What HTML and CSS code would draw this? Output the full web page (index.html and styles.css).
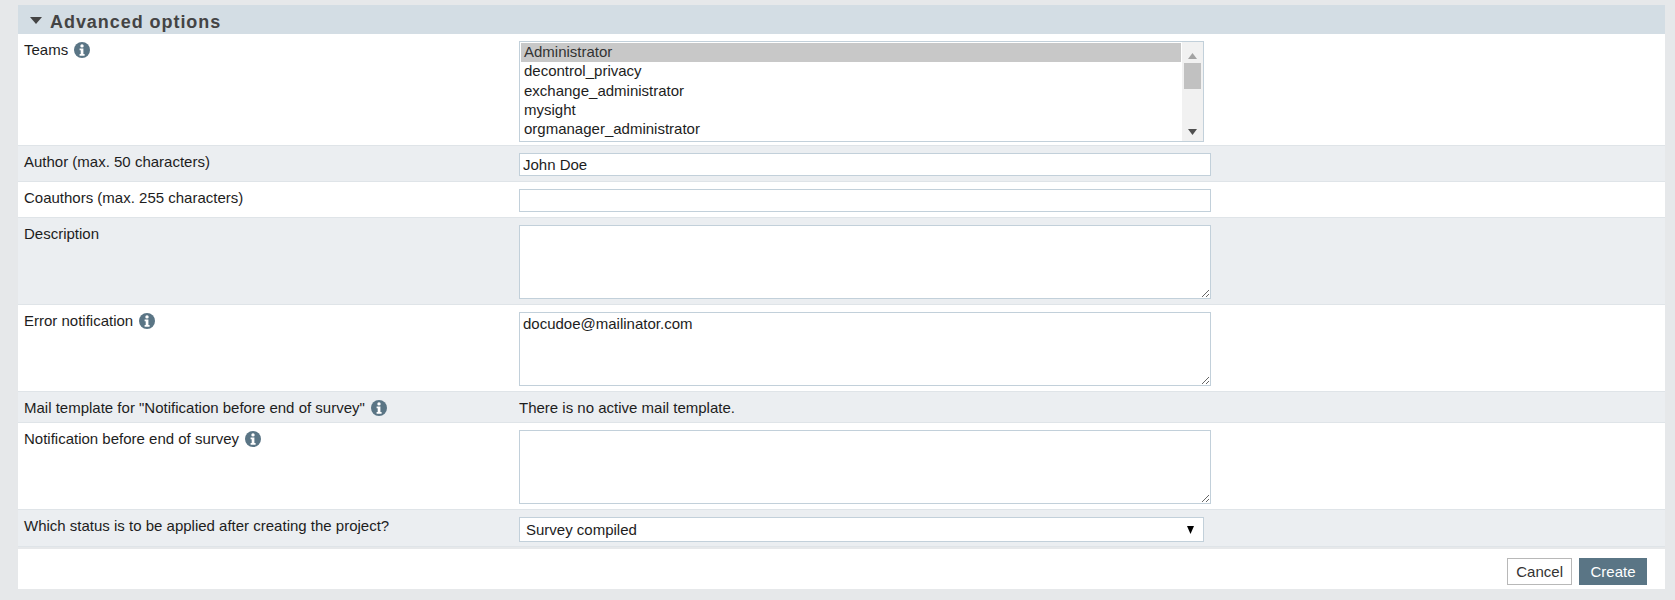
FILE: index.html
```html
<!DOCTYPE html>
<html lang="en">
<head>
<meta charset="utf-8">
<title>Advanced options</title>
<link rel="stylesheet" href="styles.css">
</head>
<body>
<main class="panel">
  <h2 class="section-head">
    <svg class="caret" width="12" height="7" viewBox="0 0 12 7"><path d="M0 0h12L6 7z"/></svg>
    Advanced options
  </h2>
  <div class="row row-teams">
    <div class="label">Teams
      <svg class="info" viewBox="0 0 16 16"><circle cx="8" cy="8" r="8"/><circle cx="8" cy="3.9" r="1.7" fill="#fff"/><path d="M5.6 6.600h3.800v5.500h1.200v1.700H5.600v-1.700h1.100V8.300H5.600z" fill="#fff"/></svg>
    </div>
    <div class="listbox">
      <ul class="options">
        <li class="selected">Administrator</li>
        <li class="tight">decontrol_privacy</li>
        <li>exchange_administrator</li>
        <li>mysight</li>
        <li>orgmanager_administrator</li>
      </ul>
      <div class="scrollbar">
        <svg class="arrow" width="9" height="6" viewBox="0 0 9 6"><path d="M0 6L4.500 0 9 6z" fill="#a3a3a3"/></svg>
        <div class="thumb"></div>
        <svg class="arrow arrow-down" width="9" height="6" viewBox="0 0 9 6"><path d="M0 0h9L4.500 6z" fill="#505050"/></svg>
      </div>
    </div>
  </div>
  <div class="row alt row-input">
    <div class="label">Author (max. 50 characters)</div>
    <input class="field" type="text" value="John Doe">
  </div>
  <div class="row row-input">
    <div class="label">Coauthors (max. 255 characters)</div>
    <input class="field" type="text">
  </div>
  <div class="row alt row-area">
    <div class="label">Description</div>
    <textarea class="field area"></textarea>
  </div>
  <div class="row row-area">
    <div class="label">Error notification
      <svg class="info" viewBox="0 0 16 16"><circle cx="8" cy="8" r="8"/><circle cx="8" cy="3.9" r="1.7" fill="#fff"/><path d="M5.6 6.600h3.800v5.500h1.200v1.700H5.600v-1.700h1.100V8.300H5.600z" fill="#fff"/></svg>
    </div>
    <textarea class="field area">docudoe@mailinator.com</textarea>
  </div>
  <div class="row alt row-text">
    <div class="label">Mail template for "Notification before end of survey"
      <svg class="info" viewBox="0 0 16 16"><circle cx="8" cy="8" r="8"/><circle cx="8" cy="3.9" r="1.7" fill="#fff"/><path d="M5.6 6.600h3.800v5.500h1.200v1.700H5.600v-1.700h1.100V8.300H5.600z" fill="#fff"/></svg>
    </div>
    <div class="value">There is no active mail template.</div>
  </div>
  <div class="row row-area">
    <div class="label">Notification before end of survey
      <svg class="info" viewBox="0 0 16 16"><circle cx="8" cy="8" r="8"/><circle cx="8" cy="3.9" r="1.7" fill="#fff"/><path d="M5.6 6.600h3.800v5.500h1.200v1.700H5.600v-1.700h1.100V8.300H5.600z" fill="#fff"/></svg>
    </div>
    <textarea class="field area"></textarea>
  </div>
  <div class="row alt row-select">
    <div class="label">Which status is to be applied after creating the project?</div>
    <div class="select-wrap">
      <select class="select"><option>Survey compiled</option></select>
      <svg class="select-arrow" width="7" height="8" viewBox="0 0 7 8"><path d="M0 0h7L3.500 8z"/></svg>
    </div>
  </div>
  <div class="gap"></div>
  <footer class="actions">
    <button class="btn" type="button">Cancel</button>
    <button class="btn primary" type="button">Create</button>
  </footer>
</main>
</body>
</html>
```
FILE: styles.css
```css
* { box-sizing: border-box; }
html, body { height: 100%; }
body {
  margin: 0;
  padding: 5px 10px 10px 18px;
  background: #e6e8ea;
  font-family: "Liberation Sans", Arial, sans-serif;
  font-size: 15px;
  color: #1d1d1d;
  overflow: hidden;
}
.panel { background: #fff; }
.section-head {
  display: flex;
  align-items: center;
  gap: 8px;
  height: 29px;
  margin: 0;
  padding: 5px 0 0 12px;
  background: #d3dde4;
  color: #444;
  font-size: 18px;
  font-weight: bold;
  letter-spacing: 0.950px;
}
.caret { fill: #444; margin-top: -4px; }
.row {
  display: grid;
  grid-template-columns: 501px 1fr;
  border-bottom: 1px solid #dfe4e8;
  background: #fff;
}
.row.alt { background: #ebeef1; }
.label {
  padding: 0 0 0 6px;
  line-height: 17px;
}
.info {
  width: 16px;
  height: 16px;
  margin-left: 2px;
  vertical-align: -3px;
  fill: #5a7585;
}
.row-teams { height: 112px; padding-top: 7px; }
.row-input { height: 36px; padding-top: 7px; }
.row-area { height: 87px; padding-top: 7px; }
.row-text { height: 31px; align-items: center; }
.row-select { height: 37px; padding-top: 7px; }
.field {
  display: block;
  width: 692px;
  height: 23px;
  padding: 2px 3px;
  border: 1px solid #c2d0da;
  border-radius: 0;
  background: #fff;
  color: #1d1d1d;
  font: 15px "Liberation Sans", Arial, sans-serif;
  outline: none;
}
.area { height: 74px; resize: vertical; }
.value { color: #1d1d1d; }
.listbox {
  display: flex;
  width: 685px;
  height: 101px;
  border: 1px solid #c2d0da;
  background: #fff;
}
.options {
  flex: 1;
  margin: 0;
  padding: 1px 1px 0;
  list-style: none;
}
.options li {
  height: 19px;
  padding-left: 3px;
  line-height: 19px;
}
.options .selected { background: #c8c8c8; color: #333; line-height: 17px; }
.options .tight { line-height: 18px; }
.scrollbar {
  display: flex;
  flex-direction: column;
  align-items: center;
  width: 21px;
  background: #f1f1f1;
}
.arrow { margin-top: 11px; flex: none; }
.arrow-down { margin: auto 0 6px; }
.thumb { width: 17px; height: 26px; margin-top: 4px; background: #c1c1c1; }
.select-wrap { position: relative; width: 685px; height: 25px; }
.select {
  width: 100%;
  height: 100%;
  padding: 0 0 0 6px;
  border: 1px solid #c2d0da;
  border-radius: 0;
  background: #fff;
  appearance: none;
  color: #1d1d1d;
  font: 15px "Liberation Sans", Arial, sans-serif;
}
.select-arrow { position: absolute; right: 10px; top: 9px; }
.gap { height: 2px; background: #e6e8ea; }
.actions {
  display: flex;
  justify-content: flex-end;
  gap: 7px;
  height: 40px;
  padding: 9px 18px 0 0;
}
.btn {
  height: 27px;
  padding: 0 8px;
  border: 1px solid #b8b8b8;
  background: #fff;
  color: #333;
  font: 15px "Liberation Sans", Arial, sans-serif;
}
.btn.primary {
  padding: 0 10.500px;
  border-color: #5a7585;
  background: #5a7585;
  color: #fff;
}
```
